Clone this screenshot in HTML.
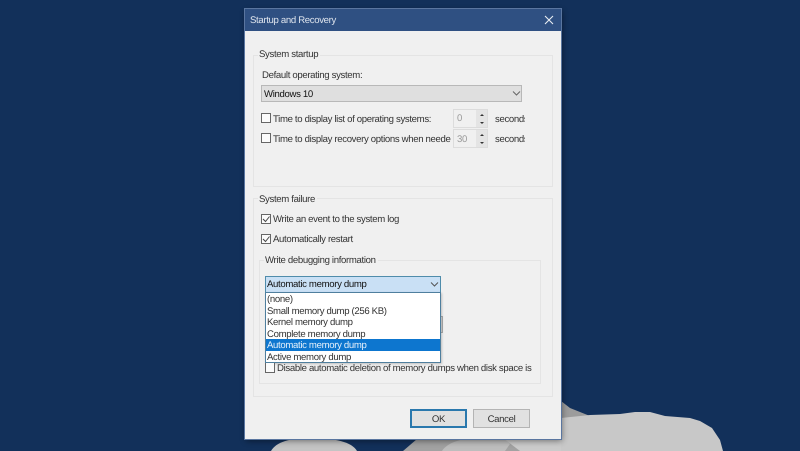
<!DOCTYPE html>
<html><head><meta charset="utf-8"><style>
html,body{margin:0;padding:0;width:800px;height:451px;overflow:hidden;background:#12305a;font-family:"Liberation Sans",sans-serif;font-size:9.6px;letter-spacing:-.34px;color:#333;text-rendering:geometricPrecision}
.a{position:absolute;white-space:nowrap}
.g{position:absolute;border:1px solid #e4e4e4;box-sizing:border-box}
.cb{position:absolute;width:10px;height:10px;box-sizing:border-box;border:1px solid #666;background:#fbfbfb}
.t{position:absolute;white-space:nowrap;line-height:14px;filter:blur(.25px);margin-top:1px}
</style></head><body>
<svg class="a" style="left:0;top:0" width="800" height="451">
<path d="M561 401L570 408L590 416L561 420Z" fill="#9c9c9c"/>
<path d="M561 418L590 415L620 414L635 412L650 412L665 416L690 418L700 421L712 428L720 440L723 451L561 451Z" fill="#c8c8c8"/>
<path d="M271 451C276 442 290 438 310 438C335 438 352 442 357 451Z" fill="#c4c4c4"/>
<path d="M403 451L417 439L561 439L561 451Z" fill="#a2a2a2"/>
<path d="M442 451C447 443 460 438 480 438L505 438L510 444L505 451Z" fill="#bdbdbd"/>
<path d="M503 438L561 438L561 451L520 451Z" fill="#cbcbcb"/>
</svg>
<div class="a" style="left:245px;top:9px;width:316px;height:430px;background:#f0f0f0;box-shadow:0 0 0 1px #5a76a0,1px 2px 6px rgba(0,0,0,.45)"></div>
<div class="a" style="left:245px;top:9px;width:316px;height:22px;background:#2f5082"></div>
<div class="t" style="left:250px;top:13px;color:#dfe5ee">Startup and Recovery</div>
<svg class="a" style="left:544px;top:15px" width="10" height="10"><path d="M1 1L9 9M9 1L1 9" stroke="#e8ecf2" stroke-width="1.1"/></svg>

<div class="g" style="left:253px;top:55px;width:300px;height:132px"></div>
<div class="t" style="left:258px;top:47px;background:#f0f0f0;padding:0 2px 0 1px">System startup</div>
<div class="t" style="left:262px;top:68px">Default operating system:</div>
<div class="a" style="left:261px;top:85px;width:261px;height:17px;background:#dfdfdf;border:1px solid #b8b8b8;box-sizing:border-box"></div>
<div class="t" style="left:264px;top:87px;color:#111">Windows 10</div>
<svg class="a" style="left:512px;top:90px" width="9" height="7"><path d="M1 1.5L4.5 5L8 1.5" stroke="#666" fill="none"/></svg>

<div class="cb" style="left:261px;top:113px"></div>
<div class="t" style="left:273px;top:112px;width:178px;overflow:hidden">Time to display list of operating systems:</div>
<div class="a" style="left:453px;top:109px;width:35px;height:19px;background:#f0f0f0;border:1px solid #dcdcdc;box-sizing:border-box"></div>
<div class="t" style="left:457px;top:111px;color:#9a9a9a">0</div>
<div class="a" style="left:476px;top:110px;width:11px;height:17px;background:#e4e4e4"></div>
<svg class="a" style="left:477px;top:111px" width="10" height="16"><path d="M3 5L5 3L7 5ZM3 11L5 13L7 11Z" fill="#333"/></svg>
<div class="t" style="left:495px;top:112px;width:30px;overflow:hidden">seconds</div>

<div class="cb" style="left:261px;top:133px"></div>
<div class="t" style="left:273px;top:132px;width:178px;overflow:hidden">Time to display recovery options when needed</div>
<div class="a" style="left:453px;top:129px;width:35px;height:19px;background:#f0f0f0;border:1px solid #dcdcdc;box-sizing:border-box"></div>
<div class="t" style="left:457px;top:132px;color:#9a9a9a">30</div>
<div class="a" style="left:476px;top:130px;width:11px;height:17px;background:#e4e4e4"></div>
<svg class="a" style="left:477px;top:131px" width="10" height="16"><path d="M3 5L5 3L7 5ZM3 11L5 13L7 11Z" fill="#333"/></svg>
<div class="t" style="left:495px;top:132px;width:30px;overflow:hidden">seconds</div>

<div class="g" style="left:253px;top:198px;width:300px;height:199px"></div>
<div class="t" style="left:258px;top:192px;background:#f0f0f0;padding:0 2px 0 1px">System failure</div>
<div class="cb" style="left:261px;top:214px"></div>
<svg class="a" style="left:261px;top:214px" width="11" height="11"><path d="M2 5L4.5 7.5L8.5 2.5" stroke="#444" fill="none" stroke-width="1"/></svg>
<div class="t" style="left:273px;top:212px">Write an event to the system log</div>
<div class="cb" style="left:261px;top:234px"></div>
<svg class="a" style="left:261px;top:234px" width="11" height="11"><path d="M2 5L4.5 7.5L8.5 2.5" stroke="#444" fill="none" stroke-width="1"/></svg>
<div class="t" style="left:273px;top:232px">Automatically restart</div>

<div class="g" style="left:259px;top:260px;width:282px;height:124px"></div>
<div class="t" style="left:264px;top:253px;background:#f0f0f0;padding:0 2px 0 1px">Write debugging information</div>

<div class="a" style="left:435px;top:316px;width:8px;height:17px;background:#d8d8d8;border:1px solid #aaa;box-sizing:border-box"></div>
<div class="a" style="left:265px;top:276px;width:176px;height:17px;background:#c9e0f5;border:1px solid #4f8cab;box-sizing:border-box"></div>
<div class="t" style="left:267px;top:277px;color:#111">Automatic memory dump</div>
<svg class="a" style="left:430px;top:281px" width="9" height="7"><path d="M1 1.5L4.5 5L8 1.5" stroke="#555" fill="none"/></svg>
<div class="a" style="left:265px;top:292px;width:176px;height:71px;background:#fff;border:1px solid #4f7f9e;box-sizing:border-box;box-shadow:1px 1px 2px rgba(0,0,0,.2)">
<div class="a" style="left:0;top:46px;width:174px;height:12px;background:#0d76cf"></div>
</div>
<div class="t" style="left:267px;top:292px">(none)</div>
<div class="t" style="left:267px;top:304px">Small memory dump (256 KB)</div>
<div class="t" style="left:267px;top:315px">Kernel memory dump</div>
<div class="t" style="left:267px;top:327px">Complete memory dump</div>
<div class="t" style="left:267px;top:338px;color:#e6f1fb">Automatic memory dump</div>
<div class="t" style="left:267px;top:350px">Active memory dump</div>

<div class="a" style="left:265px;top:363px;width:10px;height:10px;box-sizing:border-box;border:1px solid #666;border-top:none;background:#fbfbfb"></div>
<div class="t" style="left:277px;top:361px;width:255px;overflow:hidden">Disable automatic deletion of memory dumps when disk space is low</div>

<div class="a" style="left:410px;top:409px;width:57px;height:19px;background:#e1e1e1;border:2px solid #2a78ad;box-sizing:border-box;text-align:center;line-height:17px">OK</div>
<div class="a" style="left:473px;top:409px;width:57px;height:19px;background:#e1e1e1;border:1px solid #b4b4b4;box-sizing:border-box;text-align:center;line-height:19px">Cancel</div>
</body></html>
